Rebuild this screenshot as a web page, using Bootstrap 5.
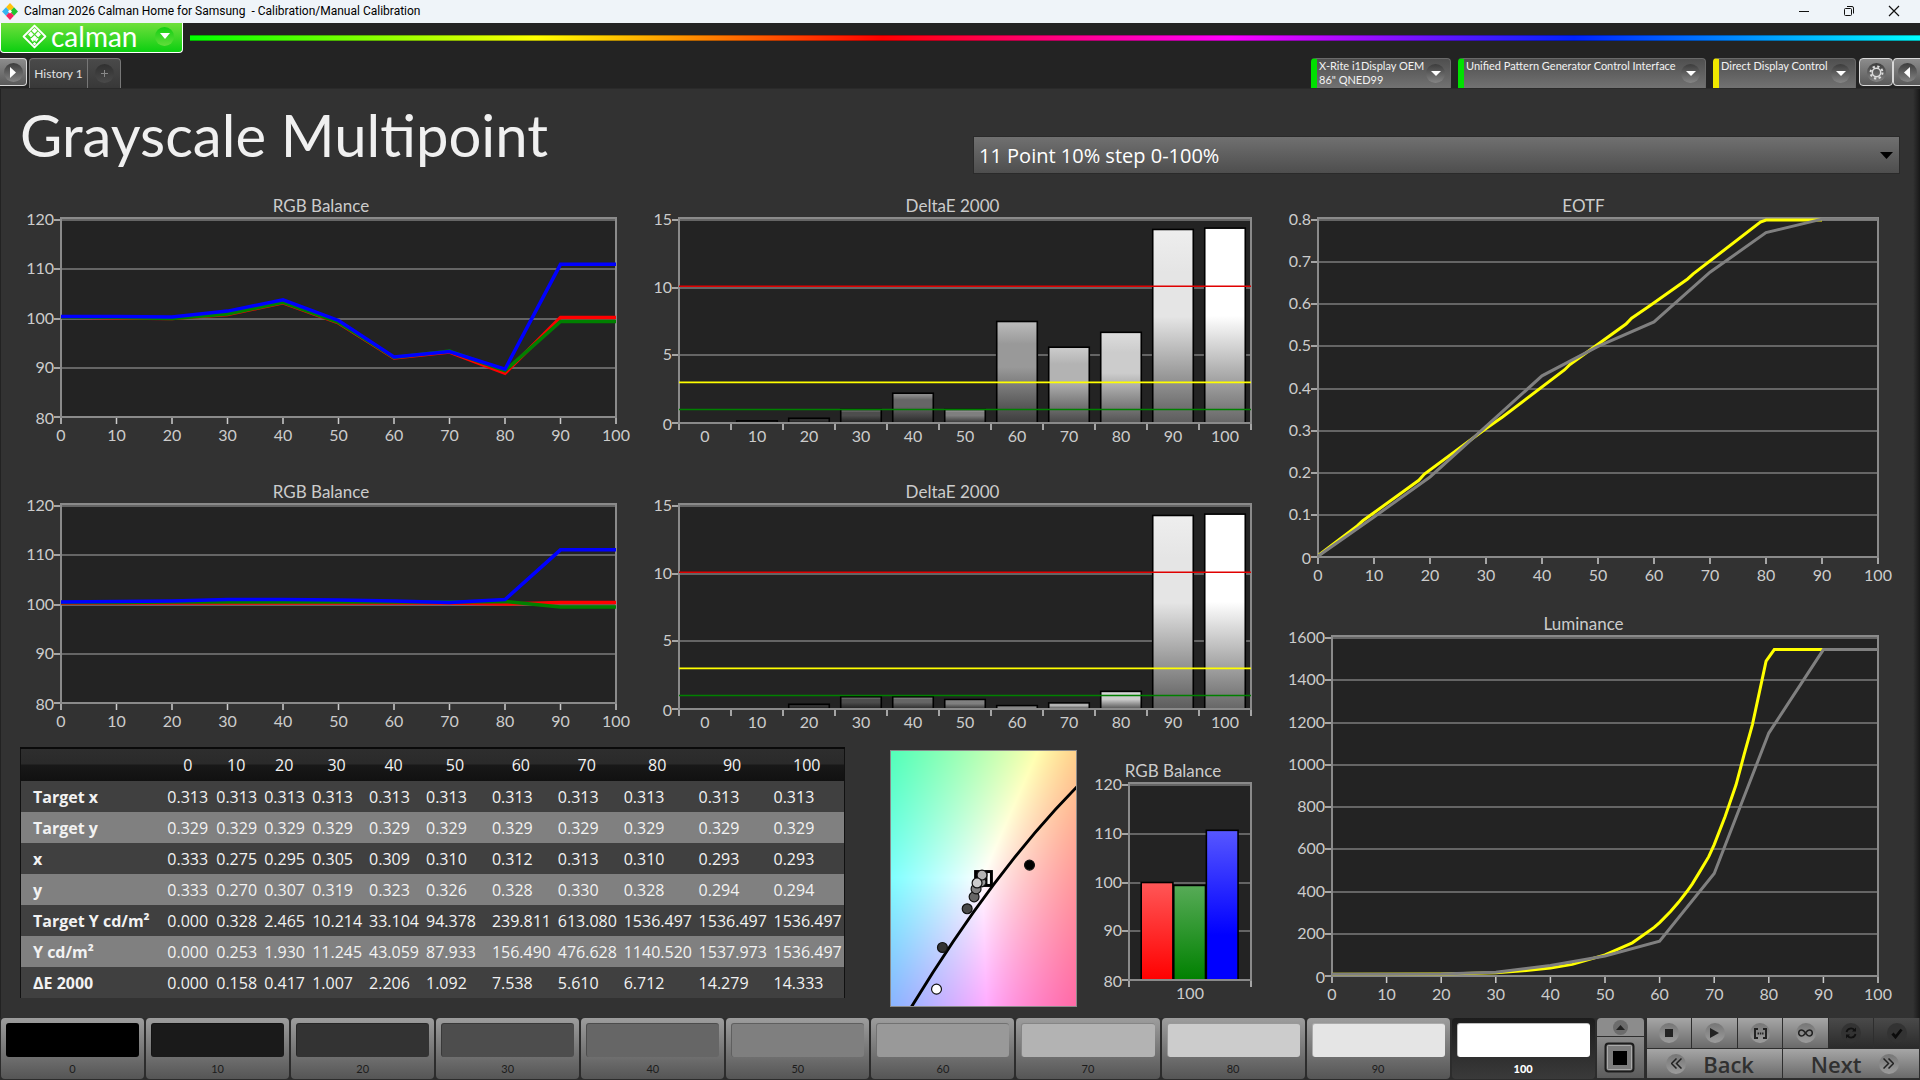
<!DOCTYPE html>
<html lang="en">
<head>
<meta charset="utf-8">
<meta name="viewport" content="width=device-width, initial-scale=1">
<title>Calman 2026 Calman Home for Samsung</title>
<link href="https://cdn.jsdelivr.net/npm/bootstrap@5.3.0/dist/css/bootstrap.min.css" rel="stylesheet">
<style>
  :root { --ui: "Open Sans", "Noto Sans", sans-serif; --face: Lato, "Open Sans", sans-serif; }
  body { background: #232323; color: #eee; font-family: var(--face); font-size: 16px; line-height: 20px; }
  button { font-family: inherit; }

  .titlebar { height: 23px; background: #eff4f9; color: #000; font: 12px/23px Roboto, sans-serif; padding: 0 4px 0 2px; }
  .titlebar .caption { margin-left: 6px; white-space: pre; }
  .win-btn { width: 45px; height: 23px; border: 0; background: none; padding: 0; }
  .win-btn svg { display: block; margin: -2px auto 0; }

  .brandrow { height: 35px; }
  .brand { width: 183px; height: 30px; padding: 0 8px 3px 21px; border: 1px solid #fff; border-top: 0; border-radius: 0 0 4px 4px;
    background: linear-gradient(#6fdf3c, #3fd727 50%, #0bcf10); color: #fff; }
  .brand .word { font-size: 28px; line-height: 24px; }
  .spectrum { height: 6px; margin: 12px 0 0 7px; border: 1px solid rgba(0,0,0,.3); border-width: 1px 0;
    background: linear-gradient(90deg, #0f0, #ff0, #f00, #f0f, #02f, #0ff); }

  .tabsrow { height: 31px; border-bottom: 1px solid #2a2a2a; }
  .puck { display: grid; place-items: center; border-radius: 50%; width: 19px; height: 19px; background: linear-gradient(#3c3c3c, #858585); }
  .chrome-btn { height: 28px; border: 1px solid #d8d8d8; border-radius: 4px; padding: 0; display: grid; place-items: center;
    background: linear-gradient(#8c8c8c, #5a5a5a); color: #fff; }
  .chrome-first { width: 27px; border-left: 0; border-radius: 0 4px 4px 0; }
  .chrome-gear { width: 34px; margin-left: 3px; }
  .chrome-last { width: 27px; border-right: 0; border-radius: 4px 0 0 4px; }
  .hist { height: 30px; border: 1px solid #777; border-bottom: 0; background: linear-gradient(#4a4a4a, #383838); color: #e2e2e2;
    font-size: 12px; padding: 0; }
  .hist-a { width: 59px; border-radius: 4px 0 0 0; margin-left: 2px; }
  .hist-b { width: 33px; border-radius: 0 4px 0 0; border-left: 0; display: grid; place-items: center; color: #888; }
  .hist-b .puck { background: linear-gradient(#303030, #4a4a4a); }
  .devices { gap: 7px; }
  .device { height: 30px; border: 1px solid #6a6a6a; border-bottom: 0; border-left: 6px solid #0c0; border-radius: 4px 4px 0 0;
    background: linear-gradient(#4f4f4f, #727272); color: #f2f2f2; font-size: 11px; line-height: 14px; padding: 0 5px 0 2px;
    text-align: left; display: flex; justify-content: space-between; }
  .device .puck { margin-top: 5px; }
  .device.ok { border-left-color: #00e000; }
  .device.warn { border-left-color: #f0e800; }
  .dev-meter { width: 140px; }
  .dev-source { width: 248px; }
  .dev-display { width: 143px; }

  .stage { background: linear-gradient(270deg, #181818, rgba(24,24,24,0) 7px), #323232; border-left: 1px solid #222; flex: 1 0 auto; }
  .head { display: grid; grid-template-columns: 953fr 927fr; padding: 0 20px 0 19px; height: 105px; }
  .head h1 { font-size: 58px; line-height: 92px; margin: 0; font-weight: 400; color: #f0f0f0; white-space: nowrap; }
  .layout-pick { margin-top: 47px; height: 38px; }
  .layout-pick select { width: 100%; height: 38px; appearance: none; border: 1px solid #2a2a2a; border-radius: 0; color: #fff;
    background: linear-gradient(#707070, #4e4e4e); font: 20px/24px var(--ui); padding: 2px 30px 0 5px; }
  .layout-pick svg { position: absolute; right: 7px; top: 16px; pointer-events: none; }

  .board { display: grid; grid-template-columns: 1237fr 601fr; column-gap: 26px; padding: 0 36px 10px 19px; }
  .pairs { display: grid; grid-template-columns: 602fr 609fr; gap: 26px; }
  .lower { display: grid; grid-template-columns: 825fr 45px 187fr 12px 168fr; align-items: start; margin-top: 7px; }
  .plot svg { display: block; width: 100%; overflow: visible; }
  .plot text { font-family: var(--face); font-size: 16px; fill: #ccc; }
  .plot .plot-title { font-size: 17px; }
  .h-s { height: 260px; } .h-e { height: 390px; } .h-l { height: 394px; } .h-m { height: 248px; margin-top: 12px; }
  .rightcol { display: grid; row-gap: 28px; align-content: start; }

  .readings { table-layout: fixed; width: 100%; margin: 0; font: 16px/20px var(--ui); border-left: 1px solid #111; border-right: 1px solid #111; border-top: 2px solid #0a0a0a; }
  .readings > * > tr > * { padding: 0 0 0 4px; height: 31px; border: 0; color: #f2f2f2; background: none; box-shadow: none; vertical-align: middle; white-space: nowrap; }
  .readings > thead > tr > * { height: 33px; font-weight: 400; text-align: center; padding: 0; }
  .readings > thead > tr { background: linear-gradient(#2e2e2e 0, #2a2a2a 48%, #181818 52%, #111); }
  .readings > tbody > tr { background: #404040; }
  .readings > tbody > tr:nth-child(even) { background: #808080; }
  .readings > tbody > tr > th { padding-left: 12px; }

  .cie { aspect-ratio: 187 / 257; margin-top: 3px; border: 1px solid #8a8a8a; overflow: hidden; }
  .cie canvas, .cie svg { display: block; width: 100%; height: 100%; }
  .cie svg { position: absolute; inset: 0; }

  .dock { display: flex; gap: 2px; height: 62px; padding: 0 0 1px 1px; background: #2c2c2c; }
  .levels { flex: 1592 1 0; display: flex; gap: 2px; }
  .level { flex: 1 1 0; min-width: 0; border: 0; border-radius: 4px; padding: 5px 5px 0; background: linear-gradient(#9d9d9d, #555);
    color: #1c1c1c; font: 11px/20px var(--face); display: flex; flex-direction: column; }
  .level i { display: block; width: 100%; height: 36px; border-radius: 3px; border: 1px solid rgba(0,0,0,.25); border-width: 1px 0 0 1px; }
  .level span { width: 100%; padding-top: 2px; }
  .level.on { background: linear-gradient(#1c1c1c, #3a3a3a); color: #fff; font-weight: 900; }
  .quick { width: 48px; }
  .quick button, .ctl button { border: 0; border-right: 1px solid #2e2e2e; border-bottom: 1px solid #2e2e2e; padding: 0; color: #2a2a2a; display: flex; align-items: center; justify-content: center; }
  .quick .up { height: 19px; width: 48px; background: #8c8c8c; border-radius: 4px 4px 0 0; }
  .quick .up .puck { width: 15px; height: 15px; background: #6c6c6c; }
  .quick .pat { height: 42px; width: 48px; background: linear-gradient(#8a8a8a, #5c5c5c); }
  .ctl { flex: 273 1 0; display: grid; grid-template-columns: repeat(6, 1fr); grid-template-rows: 31px 30px; }
  .ctl button { background: linear-gradient(#a6a6a6, #6a6a6a); }
  .ctl .puck { width: 20px; height: 20px; background: linear-gradient(#767676, #9c9c9c); }
  .ctl button:disabled { background: linear-gradient(#4a4a4a, #2b2b2b); color: #111; }
  .ctl button:disabled .puck { background: #333; }
  .ctl .wide { grid-column: span 3; font: 600 22px/28px var(--ui); color: #303030; gap: 17px; }
  .ctl .wide.back { padding-right: 9px; }
  .ctl .wide.next { padding-left: 7px; }
</style>
<script src="https://cdn.jsdelivr.net/npm/bootstrap@5.3.0/dist/js/bootstrap.bundle.min.js"></script>
</head>
<body class="d-flex flex-column min-vh-100">

<header>
  <div class="titlebar d-flex align-items-center">
    <svg width="16" height="17" viewBox="0 0 16 17"><path d="M8 0l4 4.200-4 4.200-4-4.200z" fill="#ffc20e"/><path d="M4 4.300l4 4.200-4 4.200-4-4.200z" fill="#35b6f2"/><path d="M12 4.300l4 4.200-4 4.200-4-4.200z" fill="#1fc42f"/><path d="M8 8.600l4 4.200L8 17l-4-4.200z" fill="#f3225f"/><path d="M8 6.500l2 2-2 2-2-2z" fill="#fff"/></svg>
    <span class="caption">Calman 2026 Calman Home for Samsung  - Calibration/Manual Calibration</span>
    <div class="ms-auto d-flex">
      <button class="win-btn" aria-label="Minimize"><svg width="12" height="12" viewBox="0 0 12 12"><path d="M1 6.500h10" stroke="#111"/></svg></button>
      <button class="win-btn" aria-label="Restore"><svg width="12" height="12" viewBox="0 0 12 12" fill="none" stroke="#111"><rect x="1.500" y="3.500" width="7" height="7" rx="1"/><path d="M4 1.500h5a1.500 1.500 0 0 1 1.500 1.500v5.500"/></svg></button>
      <button class="win-btn" aria-label="Close"><svg width="12" height="12" viewBox="0 0 12 12"><path d="M1 1l10 10M11 1L1 11" stroke="#111" stroke-width="1.200"/></svg></button>
    </div>
  </div>

  <div class="brandrow d-flex align-items-start">
    <button class="brand d-flex align-items-center" aria-label="Calman menu">
      <svg width="25" height="25" viewBox="0 0 24 24"><path d="M12 1.500L22.500 12 12 22.500 1.500 12z" fill="none" stroke="#fff" stroke-width="1.800" stroke-linejoin="round"/><g fill="#fff"><path d="M12 3.800l2.700 2.700-2.700 2.700-2.700-2.700zM8.500 7.300l2.700 2.700-2.700 2.700L5.800 10zM15.500 7.300l2.700 2.700-2.700 2.700-2.700-2.700zM12 10.800l2.700 2.700-2.700 2.700-2.700-2.700zM8 14.200l1.600-1 1.800 3.200-1 .8zM16 14.200l-1.600-1-1.800 3.200 1 .8z"/><path d="M12 17.200l1.700 1.700L12 20.600l-1.700-1.700z"/></g></svg>
      <span class="word ms-1">calman</span>
      <span class="puck ms-auto" style="background:linear-gradient(#12cf12,#62dd3a)"><svg width="10" height="6"><path d="M0 0h10L5 6z" fill="#fff"/></svg></span>
    </button>
    <div class="spectrum flex-grow-1"></div>
  </div>

  <div class="tabsrow d-flex align-items-start">
    <button class="chrome-btn chrome-first" aria-label="Expand panel"><span class="puck"><svg width="6" height="11"><path d="M0 0l6 5.500L0 11z" fill="#fff"/></svg></span></button>
    <button class="hist hist-a">History 1</button>
    <button class="hist hist-b" aria-label="Add history"><span class="puck"><svg width="7" height="7"><path d="M3.500 0v7M0 3.500h7" stroke="#888"/></svg></span></button>
    <div class="devices ms-auto d-flex align-items-start">
      <button class="device ok dev-meter"><span>X-Rite i1Display OEM<br>86" QNED99</span><span class="puck"><svg width="10" height="5"><path d="M0 0h10L5 5z" fill="#fff"/></svg></span></button>
      <button class="device ok dev-source"><span>Unified Pattern Generator Control Interface</span><span class="puck"><svg width="10" height="5"><path d="M0 0h10L5 5z" fill="#fff"/></svg></span></button>
      <button class="device warn dev-display"><span>Direct Display Control</span><span class="puck"><svg width="10" height="5"><path d="M0 0h10L5 5z" fill="#fff"/></svg></span></button>
    </div>
    <button class="chrome-btn chrome-gear" aria-label="Settings"><span class="puck"><svg width="15" height="15" viewBox="0 0 15 15" fill="none" stroke="#ddd"><circle cx="7.500" cy="7.500" r="4.200" stroke-width="1.500"/><circle cx="7.500" cy="7.500" r="6" stroke-width="2" stroke-dasharray="2.300 2.412"/></svg></span></button>
    <button class="chrome-btn chrome-last" aria-label="Collapse panel"><span class="puck"><svg width="6" height="11"><path d="M6 0L0 5.500 6 11z" fill="#fff"/></svg></span></button>
  </div>
</header>

<main class="stage">
  <div class="head">
    <h1>Grayscale Multipoint</h1>
    <div class="layout-pick position-relative">
      <select aria-label="Point layout"><option>11 Point 10% step 0-100%</option></select>
      <svg width="13" height="7"><path d="M0 0h13L6.500 7z" fill="#000"/></svg>
    </div>
  </div>

  <div class="board">
    <div>
      <div class="pairs">
        <div class="plot h-s" id="rgb1"></div>
        <div class="plot h-s" id="de1"></div>
        <div class="plot h-s" id="rgb2"></div>
        <div class="plot h-s" id="de2"></div>
      </div>
      <div class="lower">
        <table class="table readings">
          <colgroup id="cols"></colgroup>
          <thead><tr><th aria-label="Reading"></th><th scope="col">0</th><th scope="col">10</th><th scope="col">20</th><th scope="col">30</th><th scope="col">40</th><th scope="col">50</th><th scope="col">60</th><th scope="col">70</th><th scope="col">80</th><th scope="col">90</th><th scope="col">100</th></tr></thead>
          <tbody>
            <tr><th scope="row">Target x</th><td>0.313</td><td>0.313</td><td>0.313</td><td>0.313</td><td>0.313</td><td>0.313</td><td>0.313</td><td>0.313</td><td>0.313</td><td>0.313</td><td>0.313</td></tr>
            <tr><th scope="row">Target y</th><td>0.329</td><td>0.329</td><td>0.329</td><td>0.329</td><td>0.329</td><td>0.329</td><td>0.329</td><td>0.329</td><td>0.329</td><td>0.329</td><td>0.329</td></tr>
            <tr><th scope="row">x</th><td>0.333</td><td>0.275</td><td>0.295</td><td>0.305</td><td>0.309</td><td>0.310</td><td>0.312</td><td>0.313</td><td>0.310</td><td>0.293</td><td>0.293</td></tr>
            <tr><th scope="row">y</th><td>0.333</td><td>0.270</td><td>0.307</td><td>0.319</td><td>0.323</td><td>0.326</td><td>0.328</td><td>0.330</td><td>0.328</td><td>0.294</td><td>0.294</td></tr>
            <tr><th scope="row">Target Y cd/m²</th><td>0.000</td><td>0.328</td><td>2.465</td><td>10.214</td><td>33.104</td><td>94.378</td><td>239.811</td><td>613.080</td><td>1536.497</td><td>1536.497</td><td>1536.497</td></tr>
            <tr><th scope="row">Y cd/m²</th><td>0.000</td><td>0.253</td><td>1.930</td><td>11.245</td><td>43.059</td><td>87.933</td><td>156.490</td><td>476.628</td><td>1140.520</td><td>1537.973</td><td>1536.497</td></tr>
            <tr><th scope="row">ΔE 2000</th><td>0.000</td><td>0.158</td><td>0.417</td><td>1.007</td><td>2.206</td><td>1.092</td><td>7.538</td><td>5.610</td><td>6.712</td><td>14.279</td><td>14.333</td></tr>
          </tbody>
        </table>
        <span></span>
        <div class="cie position-relative">
          <canvas id="cie" width="185" height="255"></canvas>
          <svg viewBox="-1 -1 187 257" preserveAspectRatio="none">
            <path d="M19 258Q103 120 187 35" fill="none" stroke="#000" stroke-width="3"/>
            <rect x="84.500" y="120.500" width="16" height="14" fill="#fff" stroke="#000" stroke-width="3"/>
            <path d="M86 121v13M95.500 121v13" stroke="#000" stroke-width="2"/>
            <g stroke="#111" stroke-width="1.200">
              <circle cx="139" cy="114" r="5" fill="#000"/><circle cx="51" cy="197" r="5" fill="#333"/><circle cx="76" cy="158" r="5" fill="#484848"/>
              <circle cx="83" cy="146" r="5" fill="#666"/><circle cx="85" cy="138" r="5" fill="#808080"/><circle cx="90" cy="131" r="5" fill="#999"/>
              <circle cx="91" cy="124" r="5" fill="#b3b3b3"/><circle cx="86" cy="132" r="5" fill="#ccc"/><circle cx="45" cy="239" r="5" fill="#fff"/>
            </g>
          </svg>
        </div>
        <span></span>
        <div class="plot h-m" id="rgb3"></div>
      </div>
    </div>
    <div class="rightcol">
      <div class="plot h-e" id="eotf"></div>
      <div class="plot h-l" id="lum"></div>
    </div>
  </div>
</main>

<footer class="dock">
  <div class="levels" id="levels"></div>
  <div class="quick">
    <button class="up" aria-label="Show more"><span class="puck"><svg width="9" height="5"><path d="M0 5h9L4.500 0z" fill="#222"/></svg></span></button>
    <button class="pat" aria-label="Pattern window"><svg width="32" height="32" viewBox="0 0 32 32"><rect x="1.500" y="1.500" width="28" height="28" rx="3" fill="#7c7c7c" stroke="#1c1c1c" stroke-width="2"/><rect x="3.500" y="3.500" width="24" height="24" rx="1" fill="none" stroke="#aaa"/><rect x="9" y="9" width="14" height="14" fill="#000"/></svg></button>
  </div>
  <div class="ctl">
    <button aria-label="Stop"><span class="puck"><svg width="8" height="8"><path d="M0 0h8v8H0z" fill="#222"/></svg></span></button>
    <button aria-label="Play"><span class="puck"><svg width="9" height="10"><path d="M0 0l9 5-9 5z" fill="#222"/></svg></span></button>
    <button aria-label="Read series"><span class="puck"><svg width="13" height="11" viewBox="0 0 13 11" fill="none" stroke="#222" stroke-width="2"><path d="M4 1H1v9h3M9 1h3v9H9"/><path d="M3.500 5.500h6" stroke-dasharray="1.500 .8"/></svg></span></button>
    <button aria-label="Read continuous"><span class="puck"><svg width="15" height="8" viewBox="0 0 15 8" fill="none" stroke="#222" stroke-width="1.500"><path d="M7.500 4C5.500 1 4.500 1 3.700 1a3 3 0 0 0 0 6c.8 0 1.800 0 3.800-3s3-3 3.800-3a3 3 0 0 1 0 6c-.8 0-1.800 0-3.800-3z"/></svg></span></button>
    <button aria-label="Refresh" disabled><span class="puck"><svg width="12" height="12" viewBox="0 0 12 12" fill="none" stroke="#111" stroke-width="1.800"><path d="M1.500 5a4.500 4.500 0 0 1 8-1.800M10.500 7a4.500 4.500 0 0 1-8 1.800"/><path d="M11 .5v4H7zM1 11.500v-4h4z" fill="#111" stroke="none"/></svg></span></button>
    <button aria-label="Accept" disabled><span class="puck"><svg width="12" height="11" viewBox="0 0 12 11"><path d="M1.500 5.500l3 3.500 6-7.500" fill="none" stroke="#0c0c0c" stroke-width="2.800"/></svg></span></button>
    <button class="wide back"><span class="puck"><svg width="11" height="11" viewBox="0 0 11 11" fill="none" stroke="#222" stroke-width="1.500"><path d="M5.500 .5l-5 5 5 5M10.500 .5l-5 5 5 5"/></svg></span><span>Back</span></button>
    <button class="wide next"><span>Next</span><span class="puck"><svg width="11" height="11" viewBox="0 0 11 11" fill="none" stroke="#222" stroke-width="1.500"><path d="M.5 .5l5 5-5 5M5.500 .5l5 5-5 5"/></svg></span></button>
  </div>
</footer>

<script>
const steps = [0,10,20,30,40,50,60,70,80,90,100];
const at = v => v.map((y, i) => [steps[i], y]);
const gray = p => { const g = Math.round(p * 2.55); return [g, g, g]; };

const rgbAxis = { left: 41, plotH: 199, lo: 80, hi: 120, ticks: [80,90,100,110,120], title: 'RGB Balance' };
const deAxis = { left: 31, plotH: 205, lo: 0, hi: 15, ticks: [0,5,10,15], title: 'DeltaE 2000', labelDy: 13, cats: steps,
  limits: [[10.1,'#e00000'],[3,'#ffff00'],[1,'#008000']], cols: steps.map(gray) };

const charts = {
  rgb1: { ...rgbAxis, width: 3.5, lines: [
    ['#ff0000', at([100.3,100.1,100,100.8,103.2,99.1,92,93.2,88.9,100.2,100.2])],
    ['#008000', at([100.3,100.2,100,100.9,103.3,99.2,92.1,93.4,89.4,99.4,99.4])],
    ['#0000ff', at([100.4,100.4,100.3,101.5,103.8,99.6,92.2,93.3,89.7,111,111])]] },
  rgb2: { ...rgbAxis, width: 3.5, lines: [
    ['#ff0000', at([100.3,100.3,100.3,100.3,100.3,100.3,100.3,100.3,100.1,100.4,100.4])],
    ['#008000', at([100.4,100.4,100.5,100.5,100.5,100.5,100.5,100.5,100.6,99.5,99.5])],
    ['#0000ff', at([100.5,100.6,100.7,101,101,100.9,100.7,100.4,101,111.1,111.1])]] },
  de1: { ...deAxis, bars: [0,.16,.35,1,2.2,1,7.5,5.6,6.7,14.3,14.4] },
  de2: { ...deAxis, bars: [0,0,.35,.9,.9,.7,.25,.45,1.3,14.3,14.4] },
  rgb3: { ...rgbAxis, left: 40, plotH: 197, labelDy: 13, cats: [100], bars: [100,99.4,110.7],
    cols: [[255,0,0],[0,128,0],[0,0,255]], cluster: true },
  eotf: { left: 35, plotH: 339, lo: 0, hi: .8, ticks: [0,.1,.2,.3,.4,.5,.6,.7,.8], title: 'EOTF', width: 3, lines: [
    ['#ffff00', [[0,.003],[7,.074],[8,.086],[18,.182],[19,.197],[30,.305],[33,.333],[44,.444],[45,.457],[55,.553],[56,.567],[59,.594],[66,.66],[67,.672],[79,.795],[80,.8],[90,.8]]],
    ['#808080', at([.002,.095,.19,.31,.43,.5,.558,.676,.77,.802,.802])]] },
  lum: { left: 49, plotH: 340, lo: 0, hi: 1600, ticks: [0,200,400,600,800,1000,1200,1400,1600], title: 'Luminance', width: 3, lines: [
    ['#ffff00', [[0,8],[20,9],[30,15],[35,25],[40,38],[44,55],[50,100],[55,157],[56,175],[59,230],[60,253],[62,305],[63.5,350],[65,400],[66,436],[67.5,500],[69,565],[70,622],[72,755],[74,905],[75.5,1050],[77,1190],[79.5,1490],[81,1545],[100,1545]]],
    ['#808080', at([8,8,10,18,50,95,165,485,1150,1545,1545])]] }
};

function draw(id, c) {
  const box = document.getElementById(id), W = box.clientWidth, H = box.clientHeight;
  const L = c.left, R = W - 6, T = 24, B = T + c.plotH, w = R - L;
  const y = v => B - (v - c.lo) / (c.hi - c.lo) * (c.plotH - 2);
  const x = v => L + v / 100 * w;
  let s = `<defs>`;
  (c.cols || []).forEach((k, i) => {
    const lite = k.map(n => Math.round(n + (255 - n) * .34)), dark = k.map(n => Math.round(n * .4));
    s += c.cluster
      ? `<linearGradient id="${id}g${i}" x1="0" x2="0" y1="0" y2="1"><stop stop-color="rgb(${lite})"/><stop offset="${i === 2 ? .7 : 1}" stop-color="rgb(${k})"/></linearGradient>`
      : `<linearGradient id="${id}g${i}" x1="0" x2="0" y1="0" y2="1"><stop stop-color="rgb(${lite})"/><stop offset=".22" stop-color="rgb(${k})"/><stop offset=".45" stop-color="rgb(${k})"/><stop offset="1" stop-color="rgb(${dark})"/></linearGradient>`;
  });
  s += `<clipPath id="${id}c"><rect x="${L}" y="${T - 1}" width="${w}" height="${c.plotH + 2}"/></clipPath></defs>`;
  s += `<text class="plot-title" x="${W / 2}" y="18" text-anchor="middle">${c.title}</text><rect x="${L}" y="${T}" width="${w}" height="${c.plotH}" fill="#232323"/>`;
  for (const t of c.ticks) {
    const yy = Math.round(y(t));
    s += `<path d="M${L} ${yy}H${R}" stroke="#7c7c7c" stroke-width="1.500"/><path d="M${L - 7} ${yy}H${L}" stroke="#ccc" stroke-width="1.500"/>`;
    s += `<text x="${L - 7}" y="${yy + (t === c.lo ? 7 : 5)}" text-anchor="end">${t}</text>`;
  }
  if (c.cats) {
    const cw = w / c.cats.length;
    for (let i = 0; i <= c.cats.length; i++) s += `<path d="M${L + i * cw} ${B}v7" stroke="#ccc" stroke-width="1.500"/>`;
    c.cats.forEach((t, i) => s += `<text x="${L + (i + .5) * cw}" y="${B + c.labelDy + 6}" text-anchor="middle">${t}</text>`);
    c.bars.forEach((v, i) => {
      if (v <= c.lo) return;
      const bw = c.cluster ? w * .26 : cw * .78, bx = c.cluster ? L + w * .1 + i * w * .267 : L + (i + .5) * cw - bw / 2;
      s += `<rect x="${bx}" y="${y(v)}" width="${bw}" height="${B - y(v)}" fill="url(#${id}g${i})" stroke="#000" stroke-width="1.600"/>`;
    });
  } else {
    for (const t of steps) s += `<path d="M${x(t)} ${B}v7" stroke="#ccc" stroke-width="1.500"/><text x="${x(t)}" y="${B + 24}" text-anchor="middle">${t}</text>`;
  }
  s += `<rect x="${L}" y="${T}" width="${w}" height="${c.plotH}" fill="none" stroke="#8a8a8a" stroke-width="2"/>`;
  for (const [v, k] of c.limits || []) s += `<path d="M${L} ${y(v)}H${R}" stroke="${k}" stroke-width="1.600"/>`;
  s += `<g clip-path="url(#${id}c)">`;
  for (const [k, p] of c.lines || []) s += `<polyline points="${p.map(q => x(q[0]) + ',' + y(q[1])).join(' ')}" fill="none" stroke="${k}" stroke-width="${c.width}"/>`;
  box.innerHTML = `<svg height="${H}" role="img" aria-label="${c.title}">${s}</g></svg>`;
}
function drawAll() { for (const id in charts) draw(id, charts[id]); }

/* chromaticity field: xy to linear RGB, scaled so the largest channel is full */
function paintField() {
  const cv = document.getElementById('cie'), g = cv.getContext('2d'), im = g.createImageData(cv.width, cv.height);
  for (let j = 0; j < cv.height; j++) for (let i = 0; i < cv.width; i++) {
    const cx = .2741 + i / cv.width * .0787, cy = .368 - j / cv.height * .079, X = cx / cy, Z = (1 - cx - cy) / cy;
    const c = [3.2406 * X - 1.5372 - .4986 * Z, -.9689 * X + 1.8758 + .0415 * Z, .0557 * X - .204 + 1.057 * Z], m = Math.max(...c), o = 4 * (j * cv.width + i);
    for (let k = 0; k < 3; k++) im.data[o + k] = 255 * Math.max(0, c[k]) / m;
    im.data[o + 3] = 255;
  }
  g.putImageData(im, 0, 0);
}

document.getElementById('cols').innerHTML = [143,49,48,48,57,57,66,66,66,75,75,75].map(n => `<col style="width:${n / 8.25}%">`).join('');
document.getElementById('levels').innerHTML = steps.map(n => `<button class="level${n === 100 ? ' on' : ''}"><i style="background:rgb(${gray(n)})"></i><span>${n}</span></button>`).join('');
paintField();
drawAll();
addEventListener('resize', drawAll);
</script>
</body>
</html>
